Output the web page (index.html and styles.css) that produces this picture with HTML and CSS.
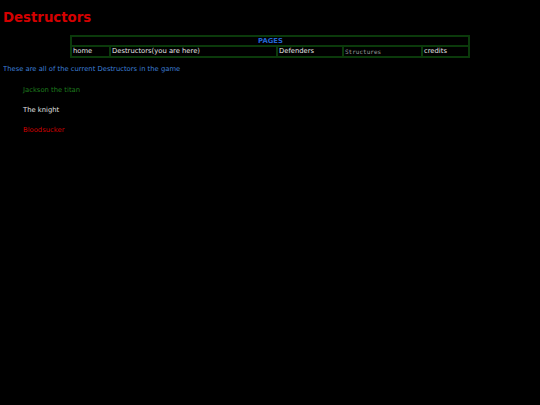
FILE: index.html
```html
<!DOCTYPE html>
<html lang="en">
<head>
  <meta charset="UTF-8">
  <title>Destructors</title>
  <link rel="stylesheet" href="styles.css">
</head>
<body>
  <h1 class="title">Destructors</h1>
  <table class="nav">
    <colgroup>
      <col class="w-home">
      <col class="w-here">
      <col class="w-def">
      <col class="w-struct">
      <col class="w-credits">
    </colgroup>
    <tr>
      <th colspan="5" class="nav-head">PAGES</th>
    </tr>
    <tr class="nav-row">
      <td>home</td>
      <td>Destructors(you are here)</td>
      <td>Defenders</td>
      <td class="c-struct">Structures</td>
      <td>credits</td>
    </tr>
  </table>
  <p class="intro">These are all of the current Destructors in the game</p>
  <ul class="list">
    <li class="green">Jackson the titan</li>
    <li class="white">The knight</li>
    <li class="red">Bloodsucker</li>
  </ul>
</body>
</html>
```

FILE: styles.css
```css
body {
  margin: 4px 3px;
  background-color: #000;
  color: #e6e6e6;
  font-family: "DejaVu Sans", Verdana, sans-serif;
  font-size: 6.8px;
}

.title {
  margin: 6px 0 0 0;
  height: 25px;
  font-size: 13.3px;
  font-weight: bold;
  color: #d40000;
}

.nav {
  width: 398px;
  margin: 0 auto;
  table-layout: fixed;
  border-collapse: collapse;
  border: 2px solid #0b3a0b;
}

.w-home { width: 39px; }
.w-here { width: 167px; }
.w-def { width: 66px; }
.w-struct { width: 79px; }
.w-credits { width: 47px; }

.nav td, .nav th {
  border: 2px solid #0b3a0b;
  padding: 0 0 0 1px;
  font-size: 6.8px;
  text-align: left;
  white-space: nowrap;
  overflow: hidden;
}

.nav-head {
  line-height: 8px;
  text-align: center !important;
  color: #2466d4;
  font-weight: bold;
}

.nav-row td {
  line-height: 9px;
}

.nav td.c-struct {
  font-family: "DejaVu Sans Mono", monospace;
  font-size: 6px;
  color: #9a9a9a;
}

.intro {
  margin: 7px 0 0 0;
  color: #3d7fd6;
}

.list {
  list-style: none;
  margin: 13px 0 0 0;
  padding: 0 0 0 20px;
}

.list li {
  height: 20px;
}

.green { color: #1e7d1e; }
.white { color: #e0e0e0; }
.red { color: #d10000; }
```
